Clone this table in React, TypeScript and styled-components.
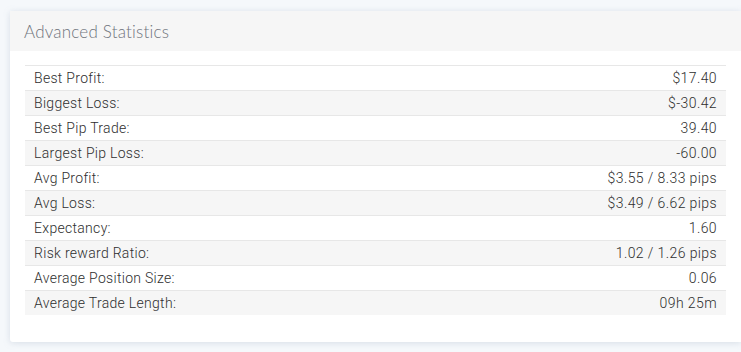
import styled, { createGlobalStyle } from "styled-components";

const GlobalStyle = createGlobalStyle`
  html, body {
    margin: 0;
    padding: 0;
    background: #f5f8fb;
  }
  body {
    font-family: Roboto, "Liberation Sans", sans-serif;
  }
`;

const Page = styled.div`
  padding: 11px 0 11px 10px;
`;

const Card = styled.section`
  background: #ffffff;
  border-radius: 3px 0 0 3px;
  box-shadow: 0 1px 6px rgba(160, 175, 195, 0.35);
  padding-bottom: 27px;
`;

const CardHeader = styled.header`
  height: 40px;
  display: flex;
  align-items: center;
  padding: 0 14px;
  background: #f6f6f6;
`;

const Title = styled.h2`
  margin: 0;
  font-family: Lato, "Open Sans", sans-serif;
  font-weight: 300;
  font-size: 17px;
  color: #6f747c;
  letter-spacing: 0.2px;
`;

const Body = styled.div`
  padding: 14px 15px 0 15px;
`;

const Table = styled.div`
  display: flex;
  flex-direction: column;
`;

const Row = styled.div<{ $shaded: boolean }>`
  display: flex;
  justify-content: space-between;
  align-items: center;
  height: 24px;
  border-top: 1px solid #e7e7e7;
  padding: 0 9px;
  background: ${(p) => (p.$shaded ? "#f6f6f6" : "#ffffff")};
  font-size: 14px;
  font-weight: 300;
  letter-spacing: 0.3px;
  color: #2e2e2e;
`;

const Label = styled.span``;

const Value = styled.span`
  letter-spacing: 0.4px;
`;

const stats = [
  { label: "Best Profit:", value: "$17.40" },
  { label: "Biggest Loss:", value: "$-30.42" },
  { label: "Best Pip Trade:", value: "39.40" },
  { label: "Largest Pip Loss:", value: "-60.00" },
  { label: "Avg Profit:", value: "$3.55 / 8.33 pips" },
  { label: "Avg Loss:", value: "$3.49 / 6.62 pips" },
  { label: "Expectancy:", value: "1.60" },
  { label: "Risk reward Ratio:", value: "1.02 / 1.26 pips" },
  { label: "Average Position Size:", value: "0.06" },
  { label: "Average Trade Length:", value: "09h 25m" },
];

function App() {
  return (
    <>
      <GlobalStyle />
      <Page>
        <Card>
          <CardHeader>
            <Title>Advanced Statistics</Title>
          </CardHeader>
          <Body>
            <Table>
              {stats.map((s, i) => (
                <Row key={s.label} $shaded={i % 2 === 1}>
                  <Label>{s.label}</Label>
                  <Value>{s.value}</Value>
                </Row>
              ))}
            </Table>
          </Body>
        </Card>
      </Page>
    </>
  );
}

export default App;
